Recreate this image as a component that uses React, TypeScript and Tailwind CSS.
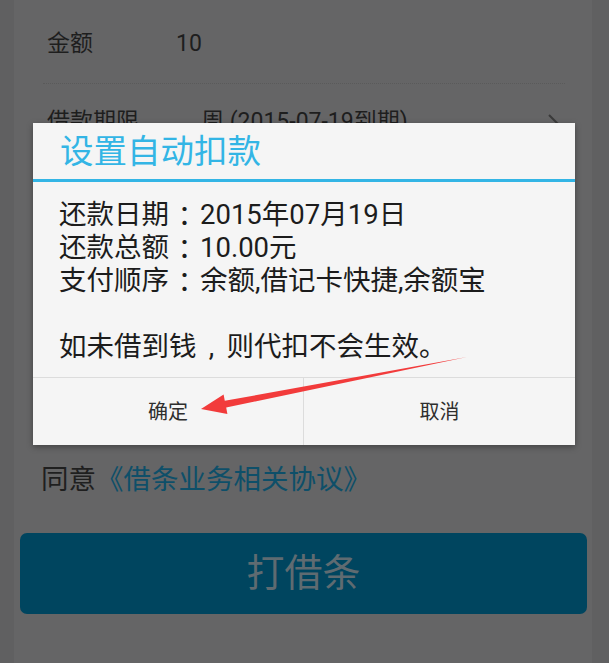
import React from 'react';

const font = "font-['Roboto','Noto_Sans_CJK_SC',sans-serif]";

// full-width punctuation centred in its cell, as on the old Android fallback font
const P = ({ c }: { c: string }) => (
  <span className="inline-block align-top h-[33px] leading-[33px] w-[31px] text-center font-['Noto_Sans_CJK_TC',sans-serif]">{c}</span>
);

export default function App() {
  return (
    <div className={`relative w-[609px] h-[663px] overflow-hidden flex bg-[#606061] ${font}`}>
      <div className="w-[14px] shrink-0" />

      {/* dimmed page behind the dialog */}
      <div className="flex-1 flex flex-col bg-[#656566]">
        <div className="ml-[29px] mr-[27px] h-[84px] flex items-center pt-[5px] pl-[4px] border-b border-dotted border-[#5a5a5a] text-[23px] text-[#1e1e1e]">
          <span className="w-[129px]">金额</span>
          <span>10</span>
        </div>
        <div className="ml-[29px] mr-[27px] h-[72px] flex items-center pt-[5px] pl-[4px] text-[23px] text-[#1e1e1e]">
          <span className="w-[154px]">借款期限</span>
          <span className="flex-1">周 (2015-07-19到期)</span>
          <svg width="12" height="20" viewBox="0 0 12 20" className="mr-[6px]">
            <path d="M2 2 L10 10 L2 18" fill="none" stroke="#3a3a3a" strokeWidth="2" />
          </svg>
        </div>

        <div className="mt-[306px] ml-[27px] h-[36px] leading-[36px] text-[27.5px] text-[#1f1f1f] whitespace-nowrap">
          同意<span className="text-[#0e4f69]">《借条业务相关协议》</span>
        </div>

        <div className="mt-[35px] ml-[6px] mr-[5px] h-[81px] rounded-[7px] bg-[#00455f] flex items-center justify-center text-[38px] text-[#5f6b71]">
          打借条
        </div>
      </div>

      <div className="w-[17px] shrink-0" />

      {/* dialog */}
      <div className="absolute left-[33px] top-[123px] w-[542px] h-[322px] bg-[#f5f5f5] flex flex-col shadow-[0_2px_6px_rgba(0,0,0,0.35)]">
        <div className="h-[56px] flex items-center pt-[3px] pl-[27px] text-[33.5px] text-[#33b5e5]">设置自动扣款</div>
        <div className="h-[3px] bg-[#33b5e5]" />
        <div className="pt-[16px] pb-[14px] pl-[26px] text-[27.5px] leading-[33px] text-[#1c1c1c] whitespace-nowrap">
          <div className="h-[33px]">还款日期<P c="：" />2015年07月19日</div>
          <div className="h-[33px]">还款总额<P c="：" />10.00元</div>
          <div className="h-[33px]">支付顺序<P c="：" />余额,借记卡快捷,余额宝</div>
          <div className="h-[33px]" />
          <div className="h-[33px]">
            如未借到钱
            <span className="inline-block align-top h-[33px] leading-[33px] w-[30px] text-center">,</span>
            则代扣不会生效。
          </div>
        </div>
        <div className="h-px bg-[#dcdcdc]" />
        <div className="flex-1 flex text-[20px] text-[#2e2e2e]">
          <div className="w-[270px] flex items-center justify-center">确定</div>
          <div className="w-px bg-[#dcdcdc]" />
          <div className="flex-1 flex items-center justify-center">取消</div>
        </div>
      </div>

      {/* red annotation arrow */}
      <svg className="absolute left-0 top-0 pointer-events-none" width="609" height="663">
        <polygon
          points="201,409 223.6,394.4 224.8,400.8 467,357 226.2,407.6 227.4,414"
          fill="#f23b3b"
        />
      </svg>
    </div>
  );
}
